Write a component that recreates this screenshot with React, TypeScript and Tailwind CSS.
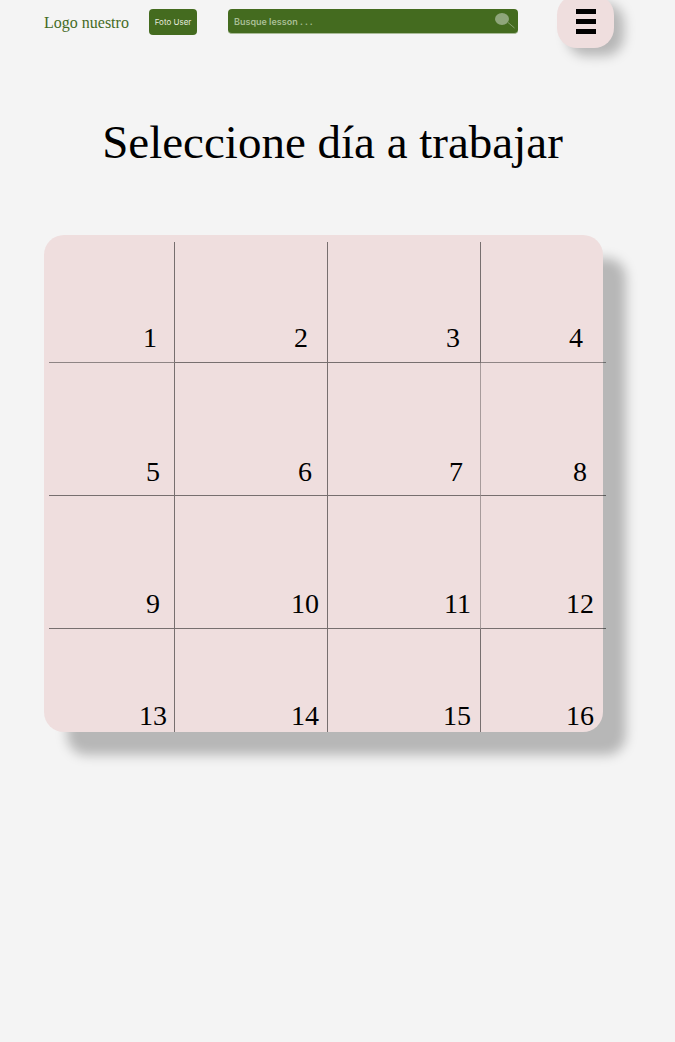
import React from "react";

type Day = { day: number; cell: string };

const days: Day[] = [
  { day: 1, cell: "pr-[17px] pb-2 border-r border-b border-r-black/50 border-b-black/40" },
  { day: 2, cell: "pr-[19px] pb-2 border-r border-b border-r-black/50 border-b-black/50" },
  { day: 3, cell: "pr-[20px] pb-2 border-r border-b border-r-black/50 border-b-black/50" },
  { day: 4, cell: "pr-[23px] pb-2 border-b border-b-black/40" },
  { day: 5, cell: "pr-[14px] pb-[7px] border-r border-b border-r-black/50 border-b-black/50" },
  { day: 6, cell: "pr-[15px] pb-[7px] border-r border-b border-r-black/50 border-b-black/50" },
  { day: 7, cell: "pr-[17px] pb-[7px] border-r border-b border-r-black/30 border-b-black/50" },
  { day: 8, cell: "pr-[19px] pb-[7px] border-b border-b-black/50" },
  { day: 9, cell: "pr-[14px] pb-2 border-r border-b border-r-black/50 border-b-black/50" },
  { day: 10, cell: "pr-[8px] pb-2 border-r border-b border-r-black/50 border-b-black/50" },
  { day: 11, cell: "pr-[9px] pb-2 border-r border-b border-r-black/30 border-b-black/50" },
  { day: 12, cell: "pr-[12px] pb-2 border-b border-b-black/50" },
  { day: 13, cell: "pr-[7px] border-r border-r-black/50" },
  { day: 14, cell: "pr-[8px] border-r border-r-black/50" },
  { day: 15, cell: "pr-[9px] border-r border-r-black/50" },
  { day: 16, cell: "pr-[12px]" },
];

function Header() {
  return (
    <header className="flex items-start pr-[61px] pl-11">
      <a
        href="#"
        className="mt-3 w-[105px] shrink-0 whitespace-nowrap font-['Liberation_Serif',serif] text-[16px] leading-[22px] text-[#446b1f]"
      >
        Logo nuestro
      </a>
      <button
        type="button"
        className="mt-[9px] h-[26px] w-12 shrink-0 rounded-[4px] bg-[#446b1f] text-[8px] leading-none whitespace-nowrap text-[#e4eadd]"
      >
        Foto User
      </button>
      <form
        role="search"
        className="mt-[9px] mr-[39px] ml-[31px] flex h-[25px] min-w-0 flex-1 items-center rounded-[4px] border-b border-[#a9bb98] bg-[#446b1f]"
      >
        <input
          type="text"
          aria-label="Busque lesson"
          placeholder="Busque lesson . . ."
          className="h-full min-w-0 flex-1 bg-transparent pl-[6px] text-[9px] font-semibold text-white outline-none placeholder:text-[#a9bf95]"
        />
        <button type="submit" aria-label="Buscar" className="mr-[2px] shrink-0">
          <svg width="22" height="18" viewBox="0 0 22 18" className="block">
            <ellipse cx="8" cy="7" rx="7" ry="6" fill="#8fa67b" />
            <path d="M14 10.5 L20.5 16" stroke="#8fa67b" strokeWidth="0.9" />
          </svg>
        </button>
      </form>
      <button
        type="button"
        aria-label="Menú"
        className="-mt-[5px] flex h-[53px] w-[57px] shrink-0 flex-col items-center gap-[5px] rounded-[20px] bg-[#efdede] pt-[14px] shadow-[10px_8px_12px_rgba(0,0,0,0.25)]"
      >
        <span className="h-[5px] w-5 bg-black" />
        <span className="h-[5px] w-5 bg-black" />
        <span className="h-[5px] w-5 bg-black" />
      </button>
    </header>
  );
}

export default function App() {
  return (
    <div className="min-h-screen overflow-x-hidden bg-[#f4f4f4] font-['Inter',sans-serif] text-black">
      <Header />
      <main className="pb-20">
        <h1 className="mt-[66px] pr-[54px] pl-11 text-center font-['Liberation_Serif',serif] text-[47px] leading-[56px]">
          Seleccione día a trabajar
        </h1>
        <section
          aria-label="Días"
          className="mt-[65px] mr-[72px] ml-11 rounded-[20px] bg-[#efdede] pt-[7px] pl-[5px] shadow-[23px_23px_12px_rgba(0,0,0,0.25)]"
        >
          <div className="-mr-[3px] grid grid-cols-[126fr_153fr_153fr_125fr] grid-rows-[121px_133px_133px_103px] font-['Liberation_Serif',serif] text-[28px] leading-8">
            {days.map(({ day, cell }) => (
              <button key={day} type="button" className={`flex items-end justify-end ${cell}`}>
                {day}
              </button>
            ))}
          </div>
        </section>
      </main>
    </div>
  );
}
